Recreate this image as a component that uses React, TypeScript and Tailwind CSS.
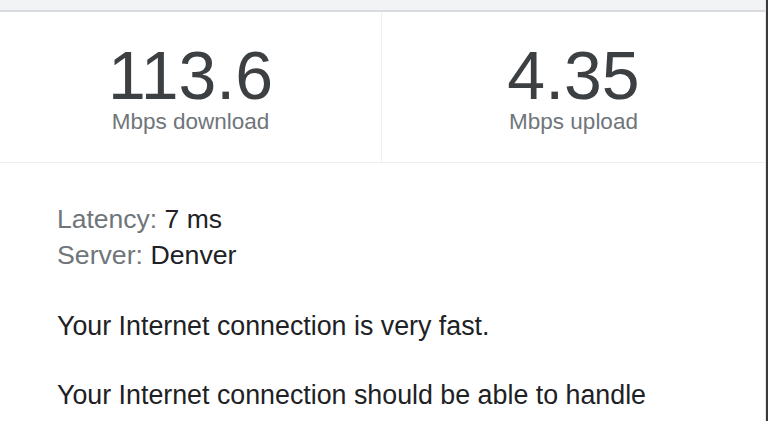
export default function App() {
  return (
    <div
      className="w-[768px] h-[421px] overflow-hidden bg-white flex"
      style={{ fontFamily: '"Liberation Sans", Arial, sans-serif' }}
    >
      <div className="flex-1 flex flex-col border-r border-[#e6e6e6]">
        <div className="h-[10px] bg-[#f1f3f4] border-b-2 border-[#d9dbde] box-content" />
        <div className="flex h-[151px] border-b border-[#efefef]">
          <div className="w-[382px] border-r border-[#efefef] flex flex-col items-center pt-[29px]">
            <div className="text-[68px] leading-none text-[#3c4043]">113.6</div>
            <div className="text-[22.5px] leading-none text-[#70757a] mt-[2px]">Mbps download</div>
          </div>
          <div className="flex-1 flex flex-col items-center pt-[29px]">
            <div className="text-[68px] leading-none text-[#3c4043]">4.35</div>
            <div className="text-[22.5px] leading-none text-[#70757a] mt-[2px]">Mbps upload</div>
          </div>
        </div>
        <div className="pl-[57px] pt-[38px] text-[#202124]">
          <div className="text-[26.5px] leading-[36px]">
            <span className="text-[#70757a]">Latency:</span> 7 ms
          </div>
          <div className="text-[26.7px] leading-[37px]">
            <span className="text-[#70757a]">Server:</span> Denver
          </div>
          <p className="text-[26.8px] leading-[36px] mt-[34px]">Your Internet connection is very fast.</p>
          <p className="text-[26.8px] leading-[36px] mt-[33px]">
            Your Internet connection should be able to handle
          </p>
        </div>
      </div>
      <div className="w-[2px] bg-[#3a3a3a]" />
    </div>
  );
}
